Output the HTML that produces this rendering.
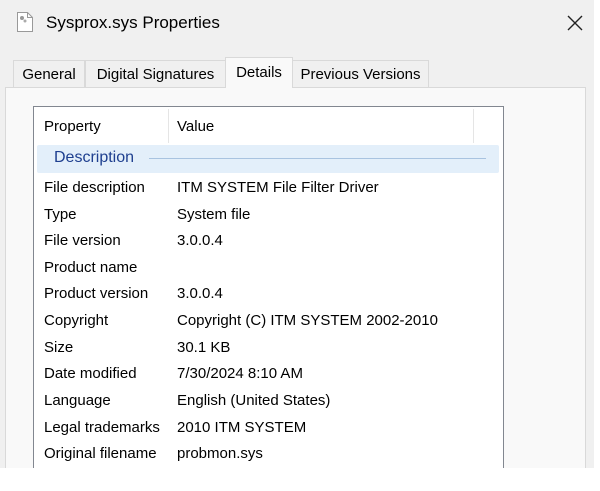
<!DOCTYPE html>
<html><head><style>
body{margin:0;width:600px;height:491px;background:#fff;font-family:"Liberation Sans",sans-serif;position:relative;overflow:hidden;color:#000}
.win{position:absolute;left:0;top:0;width:594px;height:468px;background:#f0f0f0;overflow:hidden}
.abs{position:absolute;white-space:nowrap}
.tab{position:absolute;top:60px;height:27px;border:1px solid #d9d9d9;border-bottom:none;background:#f0f0f0;font-size:15px;line-height:27px;text-align:center;box-sizing:border-box}
.panel{position:absolute;left:5px;top:87px;width:581px;height:390px;background:#f9f9f9;border:1px solid #d9d9d9;box-sizing:border-box}
.list{position:absolute;left:33px;top:106px;width:471px;height:380px;background:#fff;border:1px solid #828790;box-sizing:border-box}
.row{position:absolute;font-size:15px;line-height:20px;white-space:nowrap}
</style></head><body>
<div class="win">
<svg class="abs" style="left:16px;top:11px" width="18" height="22" viewBox="0 0 18 22"><path d="M1.5 1.5h10l5 5v14h-15z" fill="#fff" stroke="#999"/><path d="M11.5 1.5v5h5" fill="none" stroke="#999"/><circle cx="6" cy="7" r="2" fill="#999"/><circle cx="9" cy="10" r="1.5" fill="#aaa"/></svg>
<div class="abs" style="left:46px;top:13px;font-size:17px">Sysprox.sys Properties</div>
<svg class="abs" style="left:567px;top:15px" width="16" height="16"><path d="M1 1L15 15M15 1L1 15" stroke="#222" stroke-width="1.4"/></svg>
<div class="panel"></div>
<div class="tab" style="left:13px;width:72px">General</div>
<div class="tab" style="left:85px;width:141px">Digital Signatures</div>
<div class="tab" style="left:292px;width:137px">Previous Versions</div>
<div class="tab" style="left:225px;width:68px;top:57px;height:31px;line-height:29px;background:#f9f9f9;border-color:#d9d9d9">Details</div>
<div class="list">
<div style="position:absolute;left:134px;top:2px;width:1px;height:34px;background:#e5e5e5"></div>
<div style="position:absolute;left:439px;top:2px;width:1px;height:34px;background:#e5e5e5"></div>
<div class="row" style="left:10px;top:10px">Property</div>
<div class="row" style="left:143px;top:10px">Value</div>
<div style="position:absolute;left:3px;top:38px;width:462px;height:28px;background:#e3effa;border-radius:2px"></div>
<div class="row" style="left:20px;top:41px;color:#1e3f8f;font-size:16px">Description</div>
<div style="position:absolute;left:115px;top:51px;width:337px;height:1px;background:#a8c3e0"></div>
</div>
<div class="row" style="left:44px;top:178px">File description</div><div class="row" style="left:177px;top:178px">ITM SYSTEM File Filter Driver</div>
<div class="row" style="left:44px;top:205px">Type</div><div class="row" style="left:177px;top:205px">System file</div>
<div class="row" style="left:44px;top:231px">File version</div><div class="row" style="left:177px;top:231px">3.0.0.4</div>
<div class="row" style="left:44px;top:258px">Product name</div>
<div class="row" style="left:44px;top:284px">Product version</div><div class="row" style="left:177px;top:284px">3.0.0.4</div>
<div class="row" style="left:44px;top:311px">Copyright</div><div class="row" style="left:177px;top:311px">Copyright (C) ITM SYSTEM 2002-2010</div>
<div class="row" style="left:44px;top:338px">Size</div><div class="row" style="left:177px;top:338px">30.1 KB</div>
<div class="row" style="left:44px;top:364px">Date modified</div><div class="row" style="left:177px;top:364px">7/30/2024 8:10 AM</div>
<div class="row" style="left:44px;top:391px">Language</div><div class="row" style="left:177px;top:391px">English (United States)</div>
<div class="row" style="left:44px;top:418px">Legal trademarks</div><div class="row" style="left:177px;top:418px">2010 ITM SYSTEM</div>
<div class="row" style="left:44px;top:444px">Original filename</div><div class="row" style="left:177px;top:444px">probmon.sys</div>
</div>
</body></html>
